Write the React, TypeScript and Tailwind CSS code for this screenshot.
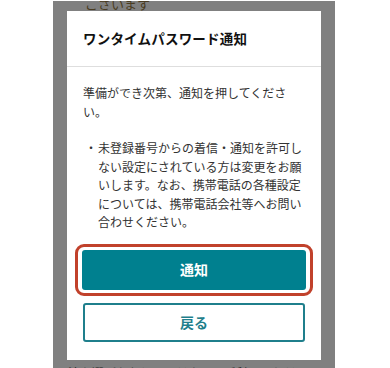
import React from 'react';

const jp = { fontFamily: '"Noto Sans CJK JP", "Noto Sans", sans-serif' };

const OtpNoticeModal: React.FC = () => {
  return (
    <div className="w-[254px] bg-white" style={jp}>
      <div className="px-4 pt-[17px] pb-[18px] border-b border-[#dedede]">
        <h2 className="text-[13.5px] leading-[20px] font-bold text-[#111] tracking-[0.2px]">ワンタイムパスワード通知</h2>
      </div>

      <div className="px-4 pt-[17px] pb-[18px]">
        <p className="text-[12px] leading-[18.5px] text-[#333]">準備ができ次第、通知を押してください。</p>
        <div className="mt-[18px] flex text-[12px] leading-[18.5px] text-[#333]">
          <span className="w-[15px] shrink-0 pl-[2px]">・</span>
          <p className="flex-1">未登録番号からの着信・通知を許可しない設定にされている方は変更をお願いします。なお、携帯電話の各種設定については、携帯電話会社等へお問い合わせください。</p>
        </div>

        <div className="mt-[12px] -mx-[8px] px-[4px] py-[3px] border-[3px] border-[#c1412b] rounded-[9px]">
          <button className="w-full h-[40px] rounded-[3px] bg-[#00808f] text-white text-[14px] font-bold">通知</button>
        </div>
        <button className="mt-[7px] w-full h-[39px] rounded-[3px] border-2 border-[#1f7f8c] bg-white text-[#1f7f8c] text-[14px] font-bold">戻る</button>
      </div>
    </div>
  );
};

export default function App() {
  return (
    <div className="w-[390px] h-[368px] bg-white overflow-hidden">
      <div className="ml-[53px] mt-[1px] w-[282px] h-[367px] bg-[#808080] overflow-hidden flex flex-col" style={jp}>
        <div className="h-[10px] shrink-0 overflow-hidden pl-[32px]">
          <p className="-mt-[5px] text-[13px] leading-[16px] text-[#4a3c22]">ございます</p>
        </div>
        <div className="pl-[14px] shrink-0">
          <OtpNoticeModal />
        </div>
        <p className="shrink-0 mt-[5px] pl-[15px] text-[12px] leading-[16px] text-[#222] whitespace-nowrap">法を選びなおしてください。ご利用いただけ</p>
      </div>
    </div>
  );
}
